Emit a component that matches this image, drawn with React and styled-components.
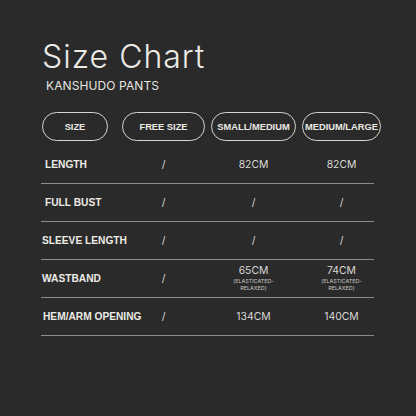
import React from "react";
import styled, { createGlobalStyle } from "styled-components";

const Global = createGlobalStyle`
  html, body { margin: 0; padding: 0; background: #2a2a2a; }
  body { width: 416px; height: 416px; overflow: hidden; }
`;

const Page = styled.div`
  width: 416px;
  height: 416px;
  box-sizing: border-box;
  background: #2a2a2a;
  padding: 37px 0 0 41px;
  display: flex;
  flex-direction: column;
  font-family: "Liberation Sans", Arial, sans-serif;
`;

const Title = styled.h1`
  margin: 0 0 0 1px;
  font-family: Inter, "Liberation Sans", sans-serif;
  font-weight: 350;
  font-size: 32px;
  line-height: 40px;
  letter-spacing: 1px;
  color: #ecebe6;
`;

const Subtitle = styled.div`
  margin: 2px 0 0 5px;
  font-family: Inter, "Liberation Sans", sans-serif;
  font-size: 12px;
  line-height: 14px;
  font-weight: 400;
  letter-spacing: 0.1px;
  color: #e6e5e0;
`;

const Table = styled.div`
  width: 333px;
  margin-top: 19px;
  display: flex;
  flex-direction: column;
`;

const Grid = styled.div`
  display: grid;
  grid-template-columns: 75px 83px 85px 79px;
  column-gap: 6px;
  align-items: center;
`;

const Header = styled(Grid)`
  height: 29px;
  margin-bottom: 5px;
`;

const Pill = styled.div`
  box-sizing: border-box;
  height: 29px;
  width: ${(p) => p.$w}px;
  margin-left: ${(p) => (p.$first ? 1 : 0)}px;
  border: 1.3px solid #d6d5d0;
  border-radius: 15px;
  display: flex;
  align-items: center;
  justify-content: center;
  font-weight: 700;
  font-size: 9.3px;
  color: #ecebe6;
  white-space: nowrap;
`;

const Row = styled(Grid)`
  height: 38px;
  box-sizing: border-box;
  border-bottom: 1.5px solid #8c8b88;
`;

const Label = styled.div`
  padding-left: ${(p) => p.$pad}px;
  font-weight: 700;
  font-size: 10.2px;
  color: #ecebe6;
  white-space: nowrap;
`;

const Cell = styled.div`
  display: flex;
  flex-direction: column;
  align-items: center;
  text-align: center;
  font-family: Inter, "Liberation Sans", sans-serif;
  font-size: 10.4px;
  color: #d9d8d4;
  line-height: 12px;
`;

const Note = styled.div`
  font-size: 5.4px;
  line-height: 7.5px;
  color: #c9c8c4;
  margin-top: 1px;
`;

const headers = [
  { t: "SIZE", w: 66 },
  { t: "FREE SIZE", w: 83 },
  { t: "SMALL/MEDIUM", w: 85 },
  { t: "MEDIUM/LARGE", w: 79 },
];

const rows = [
  { l: "LENGTH", pad: 4, v: ["/", "82CM", "82CM"] },
  { l: "FULL BUST", pad: 4, v: ["/", "/", "/"] },
  { l: "SLEEVE LENGTH", pad: 1, v: ["/", "/", "/"] },
  { l: "WASTBAND", pad: 1, v: ["/", "65CM", "74CM"], note: true },
  { l: "HEM/ARM OPENING", pad: 2, v: ["/", "134CM", "140CM"] },
];

export default function App() {
  return (
    <>
      <Global />
      <Page>
        <Title>Size Chart</Title>
        <Subtitle>KANSHUDO PANTS</Subtitle>
        <Table>
          <Header>
            {headers.map((h, i) => (
              <Pill key={h.t} $w={h.w} $first={i === 0}>
                {h.t}
              </Pill>
            ))}
          </Header>
          {rows.map((r) => (
            <Row key={r.l}>
              <Label $pad={r.pad}>{r.l}</Label>
              {r.v.map((v, i) => (
                <Cell key={i}>
                  {v}
                  {r.note && i > 0 && (
                    <Note>
                      (ELASTICATED-
                      <br />
                      RELAXED)
                    </Note>
                  )}
                </Cell>
              ))}
            </Row>
          ))}
        </Table>
      </Page>
    </>
  );
}
